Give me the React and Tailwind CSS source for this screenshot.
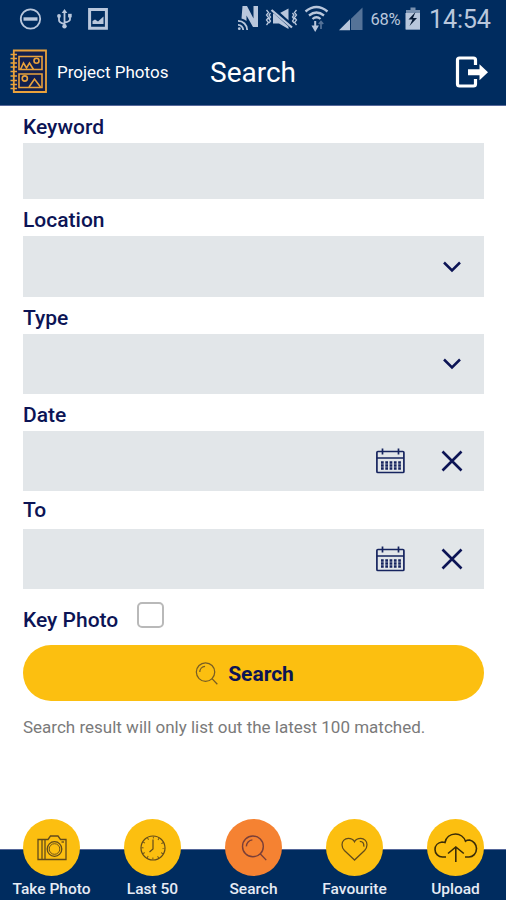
import React from "react";

function StatusBar() {
  return (
    <div className="relative h-[38px] text-[#b9c7dc]">
      <svg className="block h-[38px] w-full" viewBox="0 0 506 38" fill="none" stroke="currentColor">
        <circle cx="30.5" cy="19" r="9.700" strokeWidth="1.800" />
        <path d="M23.500 19h14" strokeWidth="3.400" />
        <g strokeWidth="1.800">
          <path d="M64.500 11v15M59 17v3.200q0 2.300 5.500 3.800M70 16v3.200q0 2.300-5.500 3.300" />
          <path d="M61.700 13l2.800-4 2.800 4z" fill="currentColor" stroke="none" />
          <circle cx="59" cy="16" r="1.900" fill="currentColor" stroke="none" />
          <path d="M68.100 13.800h3.600v3.600h-3.600z" fill="currentColor" stroke="none" />
          <circle cx="64.500" cy="26.300" r="2.200" fill="currentColor" stroke="none" />
        </g>
        <path d="M89.600 9.500h16.800v18.800H89.600z" strokeWidth="3" />
        <path d="M92.500 24v-3l2.500-1.500 3 2 5.500-5V24z" fill="currentColor" stroke="none" />
        <path d="M241.500 18.500L242.500 6h4.500l6.500 12.500V6h4.500v21h-5L246.500 15.500V21q-2-2-5-2.500z" fill="currentColor" stroke="none" />
        <g strokeWidth="1.800">
          <path d="M238 20.800a9.200 9.200 0 0 1 9.200 9.200M238 24.800a5.200 5.200 0 0 1 5.200 5.200" />
        </g>
        <circle cx="239.300" cy="28.700" r="1.400" fill="currentColor" stroke="none" />
        <path d="M273 13.500h6l9.500-5v20.500l-9.500-5.500h-6z" fill="currentColor" stroke="none" />
        <path d="M273 9.500l19.500 17.500" stroke="#002c5f" strokeWidth="4.600" />
        <path d="M271.500 10l20.500 17.500" strokeWidth="2.300" />
        <path d="M266.500 10l2 2.500-2 2.500 2 2.500-2 2.500 2 2.500-2 2.500M270.500 13l-1.500 2 1.500 2-1.500 2 1.500 2-1.500 2M296.500 10l-2 2.500 2 2.500-2 2.500 2 2.500-2 2.500 2 2.500M292.500 13l1.500 2-1.500 2 1.500 2-1.500 2 1.500 2" strokeWidth="1.300" />
        <path d="M305.500 11.500q11-9 22 0M309 15.500q7.500-6 15 0M312.500 19q4-3.500 8 0" strokeWidth="2.300" />
        <path d="M315.200 21v8M313.200 26.500l2 3.500 2-3.500z" strokeWidth="2" fill="currentColor" />
        <path d="M321 29v-7M318.800 24l2.200-2.500 2.200 2.500" stroke="#557398" strokeWidth="1.700" />
        <path d="M351 18.800L362.500 7.500V30H351z" fill="#557398" stroke="none" />
        <path d="M339 30.200l11-11v11z" fill="currentColor" stroke="none" />
        <path d="M410.500 7.500h5V10h4.500v19.500h-14V10h4.500z" fill="#7890af" stroke="none" />
        <path d="M405.500 13H420v16.500h-14.500z" fill="#b9c7dc" stroke="none" />
        <path d="M415.500 12l-7 7.500h4l-3 6.500 7.500-8h-4z" fill="#061a35" stroke="none" />
      </svg>
      <span className="absolute left-[370.500px] top-[10px] text-[16.500px] leading-[20px] tracking-[-0.3px]">68%</span>
      <span className="absolute left-[429px] top-[5px] text-[25.200px] leading-[30px] tracking-[-0.2px]">14:54</span>
    </div>
  );
}

function AlbumIcon() {
  return (
    <svg className="h-[46px] w-[40px]" viewBox="0 0 40 46" fill="none" stroke="#e9a23c" strokeWidth="1.600">
      <path d="M4.800 1.500h32.200v41.500H4.800z" fill="#12204f" strokeWidth="1.800" />
      <path d="M1.500 5.500h6.500M1.500 9.500h6.500M1.500 14h6.500M1.500 18h6.500M1.500 22.500h6.500M1.500 27h6.500M1.500 31.500h6.500M1.500 35.500h6.500M1.500 39.500h6.500" strokeWidth="1.600" />
      <path d="M10 7.500h23v13H10zM10 25h23v13.500H10z" />
      <circle cx="27.500" cy="11.800" r="2.500" />
      <circle cx="15.800" cy="29.500" r="2.600" />
      <path d="M11.500 20.500l3-6.500 3 5 3-5 4 6.500M20 38l5.500-8 6 8" />
    </svg>
  );
}

function LogoutIcon() {
  return (
    <svg className="h-[34px] w-[34px]" viewBox="0 0 34 34" fill="none" stroke="#fff" strokeWidth="3.200">
      <path d="M20.500 10V5q0-2-2-2H4.500q-2 0-2 2v24q0 2 2 2h14q2 0 2-2v-5" />
      <path d="M13 14.300h11.500V9.300L33 17.300l-8.500 8V20.300H13z" fill="#fff" stroke="none" />
    </svg>
  );
}

function Chevron() {
  return (
    <svg className="mr-[1px] h-[12px] w-[20px]" viewBox="0 0 20 12" fill="none" stroke="#0c1455" strokeWidth="2.500">
      <path d="M2 1.500l8 8 8-8" />
    </svg>
  );
}

function CalendarIcon() {
  return (
    <svg className="h-[26px] w-[30px]" viewBox="0 0 30 26" fill="none" stroke="#16245f" strokeWidth="1.700">
      <rect x="1.900" y="3.500" width="27" height="21" rx="1" />
      <path d="M1.900 10h27M7.500 0.500v6M23.500 0.500v6" />
      <path d="M6 14.500h20M6 17.500h20M6 20.500h20" strokeWidth="2.300" strokeDasharray="2.700 1.600" />
    </svg>
  );
}

function CrossIcon() {
  return (
    <svg className="h-[22px] w-[22px]" viewBox="0 0 22 22" fill="none" stroke="#0c1455" strokeWidth="2.600">
      <path d="M1.500 1.500l19 19M20.500 1.500l-19 19" />
    </svg>
  );
}

function Magnifier({ className }) {
  return (
    <svg className={className} viewBox="0 0 24 24" fill="none" stroke="currentColor" strokeWidth="1.300">
      <circle cx="11" cy="10.500" r="9.600" />
      <path d="M17.700 17.400l5.600 5.800M5 10.500a6 6 0 0 1 5.500-6" />
    </svg>
  );
}

function CameraIcon() {
  return (
    <svg className="h-[26px] w-[30px]" viewBox="0 0 30 26" fill="none" stroke="currentColor" strokeWidth="1.300">
      <path d="M1 4.500h10l2.500-3.500h7.500l2.500 3.500H29v20H1zM8 4.500v20M5 4.500v20" />
      <circle cx="17.500" cy="14" r="7.300" />
      <circle cx="17.500" cy="14" r="5.300" strokeWidth="0.900" />
      <path d="M24.500 7h2.500" />
    </svg>
  );
}

function ClockIcon() {
  return (
    <svg className="h-[26px] w-[26px]" viewBox="0 0 26 26" fill="none" stroke="currentColor" strokeWidth="1.200">
      <circle cx="13" cy="13" r="12" />
      <circle cx="13" cy="13" r="10.400" strokeDasharray="0.900 4.546" strokeDashoffset="0.450" strokeWidth="2" />
      <path d="M13 4.500v9.500l-3.500 3" />
    </svg>
  );
}

function HeartIcon() {
  return (
    <svg className="mt-[2px] h-[24px] w-[27px]" viewBox="0 0 28 25" fill="none" stroke="currentColor" strokeWidth="1.300">
      <path d="M14 24L3.500 14C2 12.500 1 10.500 1 8c0-4 3-6.500 6.500-6.500 3 0 5.200 1 6.500 3.500 1.300-2.500 3.500-3.500 6.500-3.500C24 1.500 27 4 27 8c0 2.500-1 4.500-2.500 6z" />
      <path d="M19.500 4.500c3 0 4.500 2 4.200 5.500" />
    </svg>
  );
}

function UploadIcon() {
  return (
    <svg className="h-[30px] w-[44px]" viewBox="0 0 44 30" fill="none" stroke="#3a2c08" strokeWidth="1.600">
      <path d="M12 24H8.500C4.500 24 1 21 1 16.500c0-4 3-7 7-7.500 1 0 2 .2 3 .5C12 4.500 16 1 21.500 1c4.500 0 8.500 3 10 7.200 1-.8 2.500-1.200 4-1.200 4 1 7 4.500 7 8.500 0 5-3.500 8.500-7.500 8.500h-4" />
      <path d="M21.800 29V15M14 20.500l7.800-6.500 8 6.500" />
    </svg>
  );
}

function Label({ className, children }) {
  return (
    <div className={`flex items-center text-[21px] font-medium leading-[24px] ${className}`}>
      {children}
    </div>
  );
}

function Field({ className = "h-[60px]", children }) {
  return <div className={`flex shrink-0 items-center justify-end bg-[#e2e6e9] pr-[21px] ${className}`}>{children}</div>;
}

function DateField() {
  return (
    <Field>
      <CalendarIcon />
      <span className="ml-[36px] flex"><CrossIcon /></span>
    </Field>
  );
}

const tabs = [
  { label: "Take Photo", icon: <CameraIcon /> },
  { label: "Last 50", icon: <ClockIcon /> },
  { label: "Search", icon: <Magnifier className="h-[26px] w-[26px]" />, active: true },
  { label: "Favourite", icon: <HeartIcon /> },
  { label: "Upload", icon: <UploadIcon /> },
];

export default function App() {
  return (
    <div className="flex h-[900px] w-full flex-col overflow-hidden bg-white font-['Roboto',sans-serif] text-[#0c1455]">
      <header className="h-[106px] shrink-0 border-b border-[#56689a] bg-[#002c5f]">
        <StatusBar />
        <div className="flex h-[67px] items-center pl-[9px] pr-[17px] text-white">
          <AlbumIcon />
          <span className="ml-[8px] mt-[3px] w-[153px] whitespace-nowrap text-[17px]">Project Photos</span>
          <h1 className="mt-[3px] flex-1 text-[28px] leading-[32px]">Search</h1>
          <LogoutIcon />
        </div>
      </header>

      <main className="flex flex-1 flex-col pl-[23px] pr-[22px]">
        <Label className="h-[37px] pt-[5px]">Keyword</Label>
        <Field className="h-[56px]" />
        <Label className="h-[37px] pt-[5px]">Location</Label>
        <Field className="h-[61px]"><Chevron /></Field>
        <Label className="h-[37px] pt-[5px]">Type</Label>
        <Field><Chevron /></Field>
        <Label className="h-[37px] pt-[5px]">Date</Label>
        <DateField />
        <Label className="h-[38px]">To</Label>
        <DateField />
        <div className="flex h-[56px]">
          <Label className="h-[61px] w-[114px]">Key Photo</Label>
          <span className="mt-[13px] h-[26px] w-[27px] rounded-[5px] border-2 border-[#b9b9b9] bg-white" />
        </div>
        <button className="flex h-[56px] shrink-0 items-center justify-center rounded-full bg-[#fcbf10] pr-[18px]">
          <span className="flex text-[#775d25]"><Magnifier className="h-[23px] w-[23px]" /></span>
          <span className="ml-[10px] mt-[3px] text-[21px] font-bold">Search</span>
        </button>
        <p className="mt-[15px] whitespace-nowrap text-[17px] leading-[22px] text-[#7a7a7a]">
          Search result will only list out the latest 100 matched.
        </p>
      </main>

      <nav className="grid h-[51px] shrink-0 grid-cols-5 border-t border-[#56689a] bg-[#002c5f] pl-[1px]">
        {tabs.map((tab) => (
          <div key={tab.label} className="-mt-[31px] flex flex-col items-center">
            <div
              className={`flex h-[57px] w-[57px] shrink-0 items-center justify-center rounded-full ${
                tab.active ? "bg-[#f58232] text-[#7a3f38]" : "bg-[#fcbf10] text-[#624b1b]"
              }`}
            >
              {tab.icon}
            </div>
            <span className="mt-[3px] whitespace-nowrap text-[15.500px] font-medium leading-[20px] text-[#e6ebf5]">
              {tab.label}
            </span>
          </div>
        ))}
      </nav>
    </div>
  );
}
